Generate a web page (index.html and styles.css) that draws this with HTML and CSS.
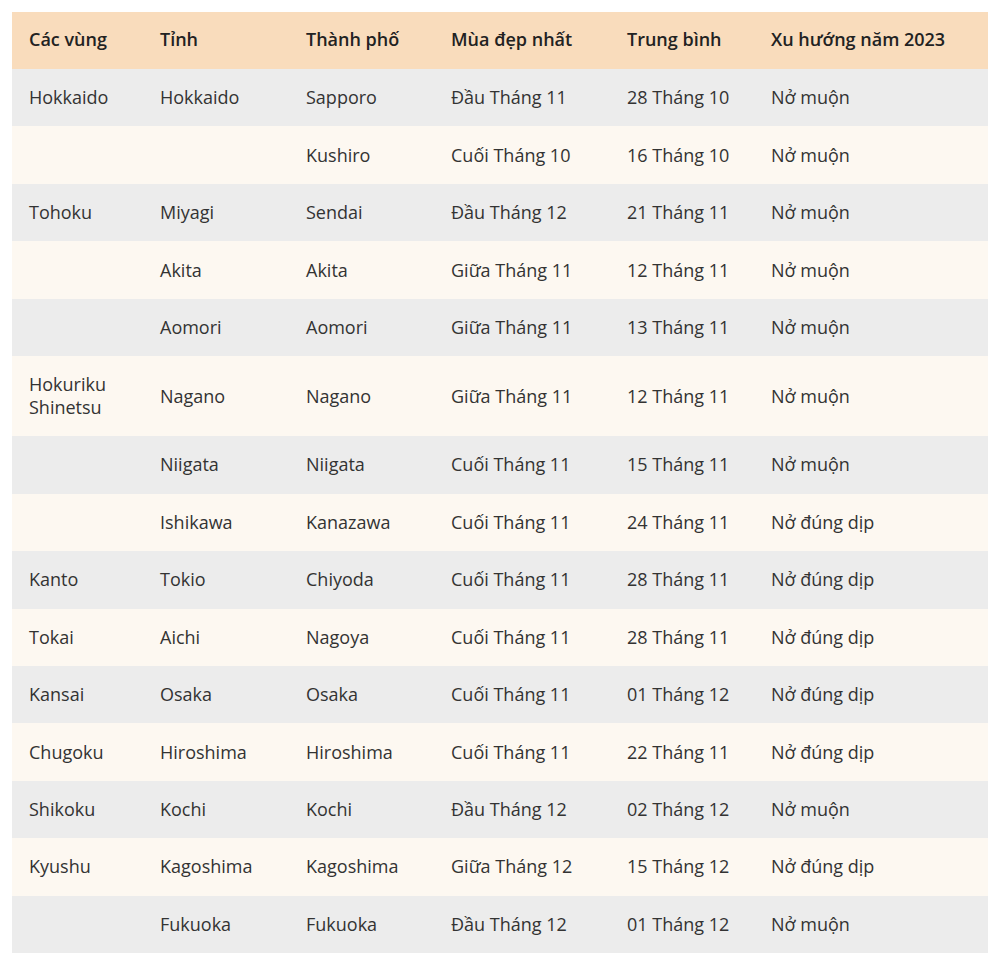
FILE: index.html
```html
<!DOCTYPE html>
<html lang="vi">
<head>
<meta charset="utf-8">
<link rel="stylesheet" href="styles.css">
</head>
<body>
<table class="bloom">
<colgroup>
<col class="c1"><col class="c2"><col class="c3"><col class="c4"><col class="c5"><col class="c6">
</colgroup>
<thead>
<tr><th>Các vùng</th><th>Tỉnh</th><th>Thành phố</th><th>Mùa đẹp nhất</th><th>Trung bình</th><th>Xu hướng năm 2023</th></tr>
</thead>
<tbody>
<tr><td>Hokkaido</td><td>Hokkaido</td><td>Sapporo</td><td>Đầu Tháng 11</td><td>28 Tháng 10</td><td>Nở muộn</td></tr>
<tr><td></td><td></td><td>Kushiro</td><td>Cuối Tháng 10</td><td>16 Tháng 10</td><td>Nở muộn</td></tr>
<tr><td>Tohoku</td><td>Miyagi</td><td>Sendai</td><td>Đầu Tháng 12</td><td>21 Tháng 11</td><td>Nở muộn</td></tr>
<tr><td></td><td>Akita</td><td>Akita</td><td>Giữa Tháng 11</td><td>12 Tháng 11</td><td>Nở muộn</td></tr>
<tr><td></td><td>Aomori</td><td>Aomori</td><td>Giữa Tháng 11</td><td>13 Tháng 11</td><td>Nở muộn</td></tr>
<tr><td>Hokuriku<br>Shinetsu</td><td>Nagano</td><td>Nagano</td><td>Giữa Tháng 11</td><td>12 Tháng 11</td><td>Nở muộn</td></tr>
<tr><td></td><td>Niigata</td><td>Niigata</td><td>Cuối Tháng 11</td><td>15 Tháng 11</td><td>Nở muộn</td></tr>
<tr><td></td><td>Ishikawa</td><td>Kanazawa</td><td>Cuối Tháng 11</td><td>24 Tháng 11</td><td>Nở đúng dịp</td></tr>
<tr><td>Kanto</td><td>Tokio</td><td>Chiyoda</td><td>Cuối Tháng 11</td><td>28 Tháng 11</td><td>Nở đúng dịp</td></tr>
<tr><td>Tokai</td><td>Aichi</td><td>Nagoya</td><td>Cuối Tháng 11</td><td>28 Tháng 11</td><td>Nở đúng dịp</td></tr>
<tr><td>Kansai</td><td>Osaka</td><td>Osaka</td><td>Cuối Tháng 11</td><td>01 Tháng 12</td><td>Nở đúng dịp</td></tr>
<tr><td>Chugoku</td><td>Hiroshima</td><td>Hiroshima</td><td>Cuối Tháng 11</td><td>22 Tháng 11</td><td>Nở đúng dịp</td></tr>
<tr><td>Shikoku</td><td>Kochi</td><td>Kochi</td><td>Đầu Tháng 12</td><td>02 Tháng 12</td><td>Nở muộn</td></tr>
<tr><td>Kyushu</td><td>Kagoshima</td><td>Kagoshima</td><td>Giữa Tháng 12</td><td>15 Tháng 12</td><td>Nở đúng dịp</td></tr>
<tr><td></td><td>Fukuoka</td><td>Fukuoka</td><td>Đầu Tháng 12</td><td>01 Tháng 12</td><td>Nở muộn</td></tr>
</tbody>
</table>
</body>
</html>
```

FILE: styles.css
```css
html, body {
  margin: 0;
  padding: 0;
  background: #ffffff;
}
body {
  padding: 12px;
  font-family: "Open Sans", "Noto Sans", sans-serif;
  color: #333333;
}
.bloom {
  width: 976px;
  border-collapse: collapse;
  table-layout: fixed;
  font-size: 18px;
  line-height: 23px;
}
.c1 { width: 131px; }
.c2 { width: 146px; }
.c3 { width: 145px; }
.c4 { width: 176px; }
.c5 { width: 144px; }
.c6 { width: 234px; }
.bloom th,
.bloom td {
  text-align: left;
  vertical-align: middle;
  padding: 17px 0 17px 17px;
  white-space: nowrap;
}
.bloom th {
  background: #f9dcbc;
  color: #222222;
  font-weight: 600;
  height: 23px;
  padding-top: 16px;
  padding-bottom: 18px;
}
.bloom td {
  height: 23.45px;
}
.bloom tbody tr:nth-child(odd) td {
  background: #ececec;
}
.bloom tbody tr:nth-child(even) td {
  background: #fdf8f1;
}
```
